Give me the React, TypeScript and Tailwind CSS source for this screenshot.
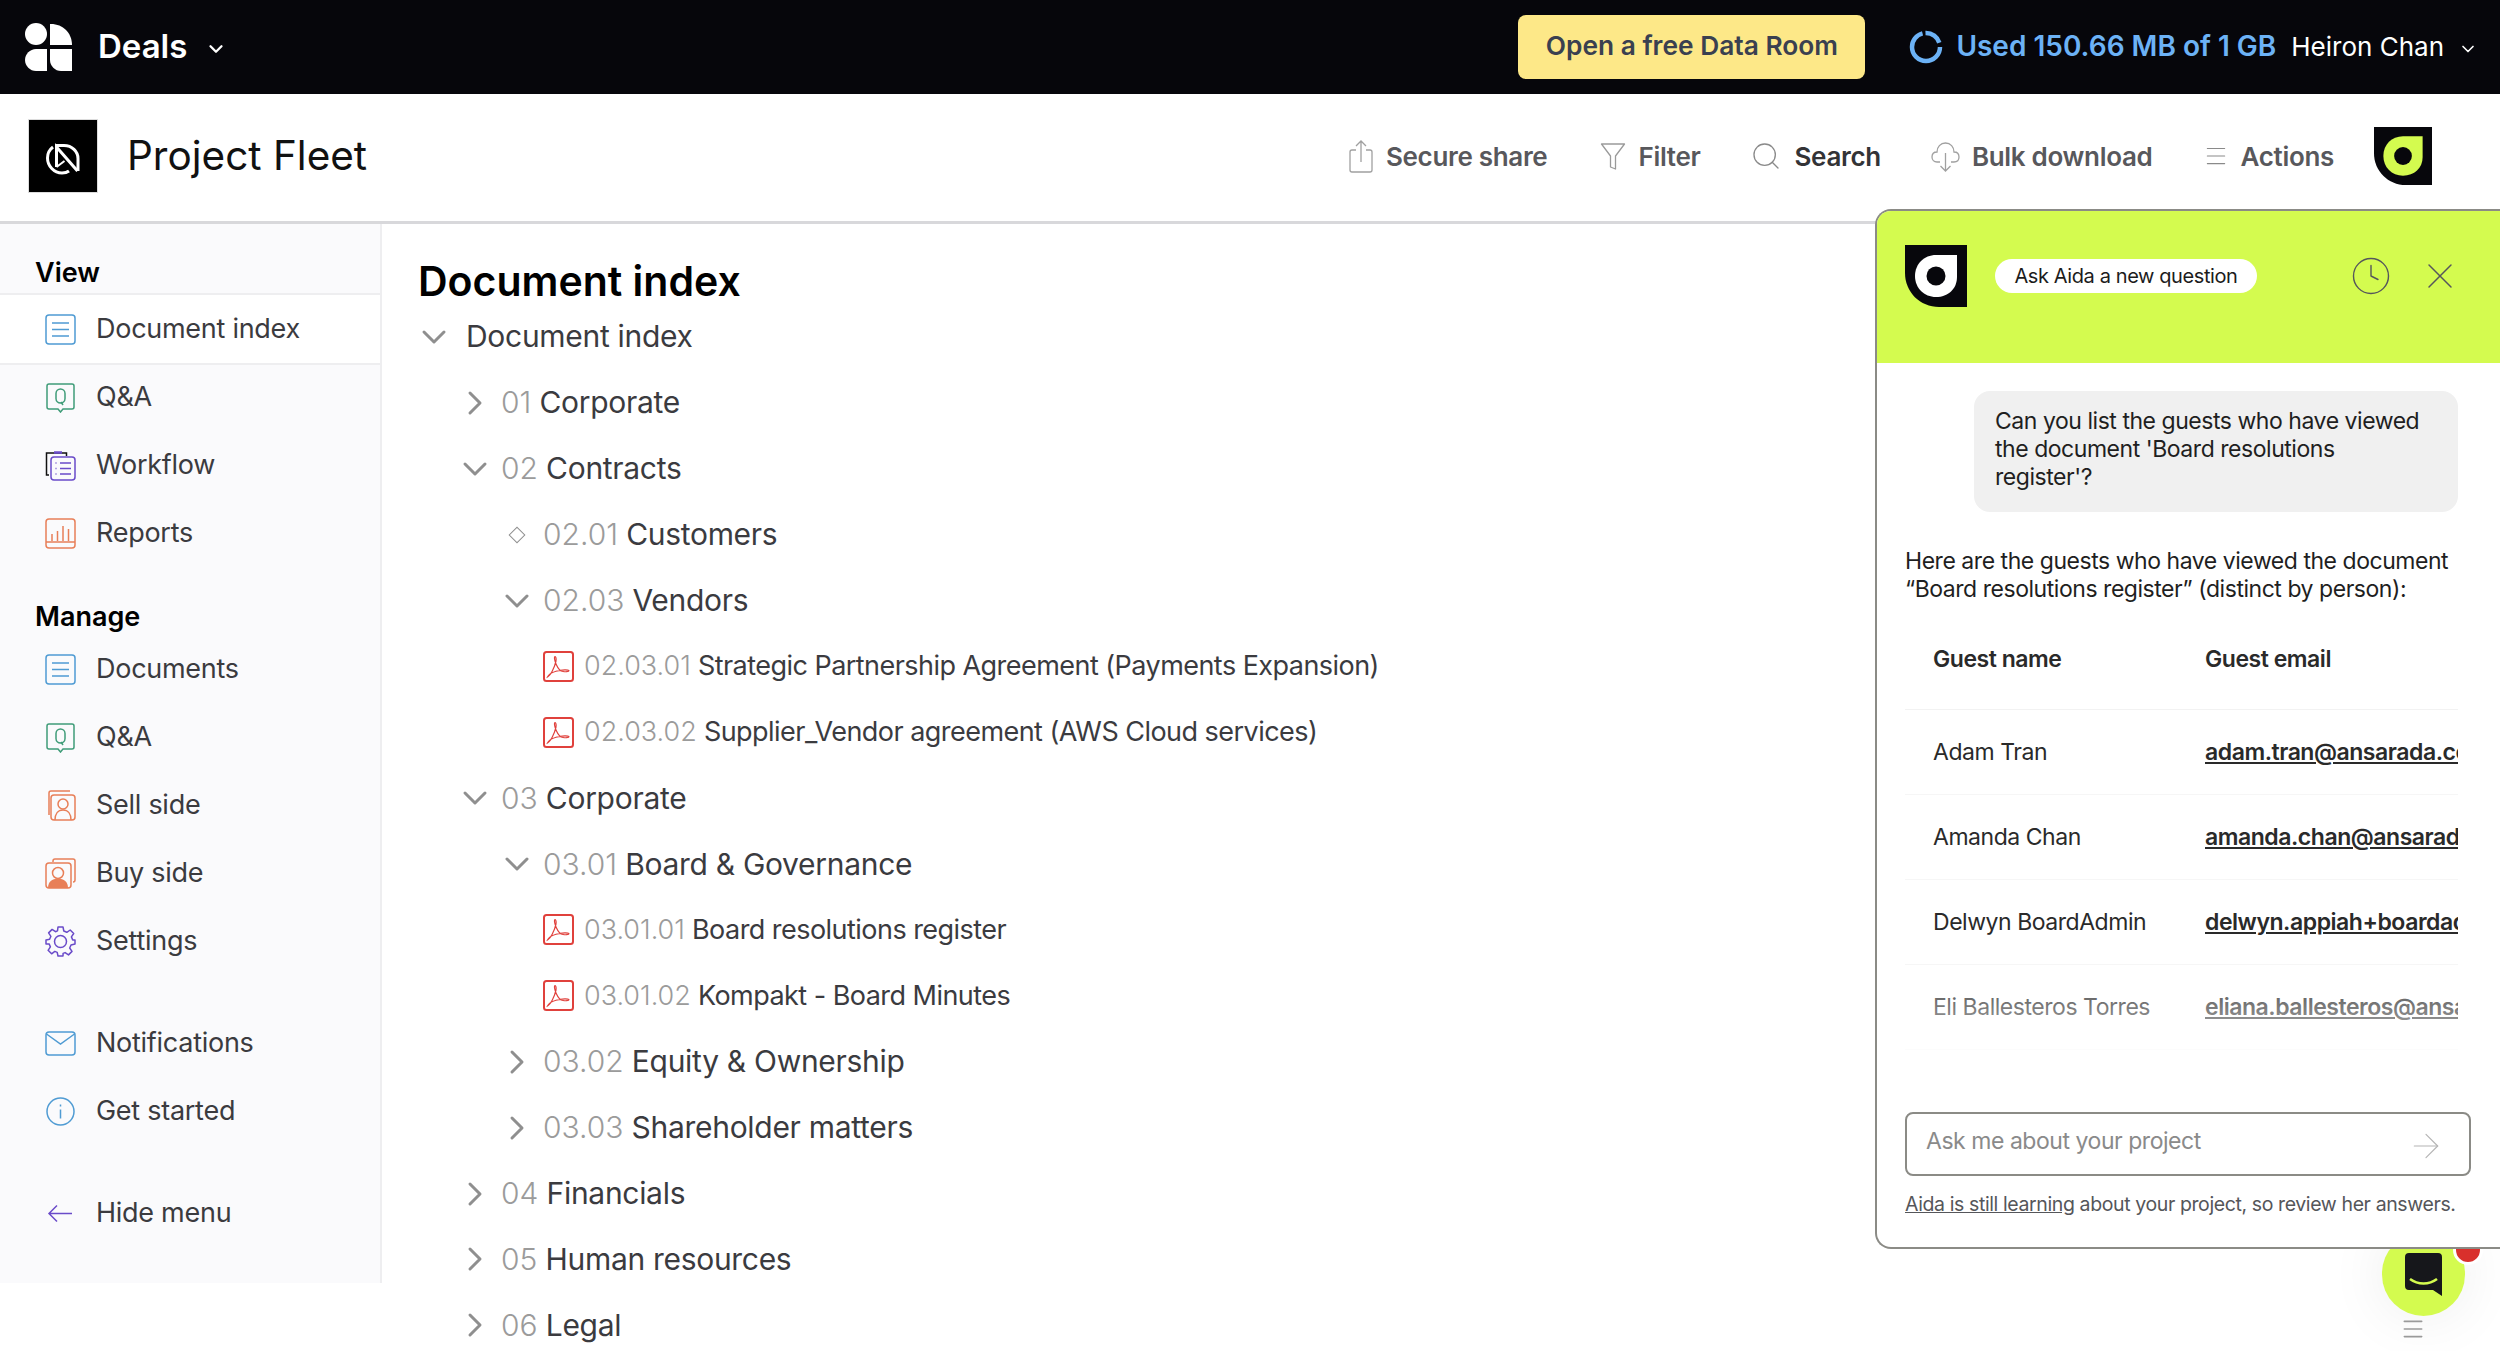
import { ArrowRight, ChevronDown, ChevronRight, Clock, Menu, Search, X } from "lucide-react";
import type { ReactNode } from "react";

const BLUE = "#4f9bd3";
const GREEN = "#3f9c78";
const PURPLE = "#6a4bc9";
const ORANGE = "#e87f58";

const Svg = ({ children, size = 31 }: { children: ReactNode; size?: number }) => (
  <svg width={size} height={size} viewBox="0 0 31 31" fill="none" strokeWidth={1.5} className="shrink-0">
    {children}
  </svg>
);

const DocIcon = () => (
  <Svg>
    <rect x="1" y="1" width="29" height="29" rx="3" stroke={BLUE} />
    <path d="M7 9h17M7 15.5h17M7 22h17" stroke={BLUE} />
  </Svg>
);

const QaIcon = () => (
  <Svg>
    <path d="M4 2h23a2 2 0 0 1 2 2v21a2 2 0 0 1-2 2h-9l-2.5 3-2.5-3H4a2 2 0 0 1-2-2V4a2 2 0 0 1 2-2z" stroke={GREEN} />
    <rect x="11" y="7" width="9" height="14" rx="4.5" stroke={GREEN} />
    <path d="M16 20l2 3" stroke={GREEN} />
  </Svg>
);

const WorkflowIcon = () => (
  <Svg>
    <path d="M4 25H1.5V3h20v3" stroke="#111" />
    <path d="M9 2.5h8" stroke={PURPLE} strokeWidth={2.5} />
    <rect x="6" y="7" width="24" height="23" rx="3" stroke={PURPLE} />
    <path d="M10.5 13h1M15 13h11M10.5 18.5h1M15 18.5h11M10.5 24h1M15 24h11" stroke={PURPLE} />
  </Svg>
);

const ReportsIcon = () => (
  <Svg>
    <rect x="1" y="1" width="29" height="29" rx="3" stroke={ORANGE} />
    <path d="M1 24h29M7 23v-7M12.5 23V13M18 23V8M23.5 23V11" stroke={ORANGE} />
  </Svg>
);

const SellIcon = () => (
  <Svg>
    <path d="M4 25V3a2 2 0 0 1 2-2h19" stroke={ORANGE} />
    <rect x="6" y="5" width="24" height="25" rx="3" stroke={ORANGE} />
    <circle cx="18" cy="14" r="5" stroke={ORANGE} />
    <path d="M10 30c0-6 3-10 8-10s8 4 8 10" stroke={ORANGE} />
  </Svg>
);

const BuyIcon = () => (
  <Svg>
    <path d="M8 4V3a2 2 0 0 1 2-2h18a2 2 0 0 1 2 2v19a2 2 0 0 1-2 2" stroke={ORANGE} />
    <rect x="1" y="5" width="25" height="25" rx="3" stroke={ORANGE} />
    <circle cx="13" cy="15" r="5.5" stroke={ORANGE} />
    <path d="M3 30c0-6 4-9.500 10-9.500s10 3.500 10 9.500z" fill={ORANGE} />
  </Svg>
);

const SettingsIcon = () => (
  <Svg>
    <circle cx="15.500" cy="15.500" r="6" stroke={PURPLE} />
    <path
      d="M13 1h5l.8 4 3 1.300 3.400-2.300 3.500 3.500-2.300 3.400 1.300 3L30 14v4l-4 1-1.300 3 2.300 3.400-3.500 3.500-3.400-2.300-2 .8L18 30h-5l-.8-3.600-2.400-1-3.200 2.400-3.500-3.500 2.300-3.400-1.300-3L1 18v-4l3.600-.7 1.300-3-2.300-3.400L7.100 3.400l3.400 2.300 2-.8z"
      stroke={PURPLE}
      strokeLinejoin="round"
    />
  </Svg>
);

const MailIcon = () => (
  <Svg>
    <rect x="1" y="4" width="29" height="23" rx="3" stroke={BLUE} />
    <path d="M1.500 6l14 10 14-10" stroke={BLUE} />
  </Svg>
);

const InfoIcon = () => (
  <Svg>
    <circle cx="15.500" cy="15.500" r="13.500" stroke={BLUE} />
    <path d="M15.500 13.500v9M15.500 8.500v2" stroke={BLUE} />
  </Svg>
);

const BackIcon = () => (
  <Svg>
    <path d="M27 15.500H4M12 7.500l-8 8 8 8" stroke={PURPLE} />
  </Svg>
);

const PdfIcon = () => (
  <svg width="31" height="31" viewBox="0 0 31 31" fill="none" className="shrink-0">
    <rect x="1" y="1" width="29" height="29" rx="2.500" stroke="#e0413c" strokeWidth="2" />
    <path
      d="M4.500 26c3-1.500 7-9 8.500-16 .4-2.500-.2-4.500-.9-4.500-1 0-.8 3.500.9 7.500 2 4.500 5 7.500 7 7.500 2 .3 6 .5 6-.7 0-1.300-7-1.300-13 .5-4 1.200-7.500 3.500-8.500 5.700z"
      stroke="#e0413c"
      strokeWidth="1.200"
    />
  </svg>
);

const AidaLogo = ({ size, inner, dot }: { size: number; inner: string; dot: string }) => (
  <svg width={size} height={size} viewBox="0 0 62 62" className="shrink-0">
    <path d="M0 0h62v62H34C15 62 0 47 0 28z" fill="#07070c" />
    <path d="M31 10h21v22c0 12-9 20-21 20S10 43 10 31s9-21 21-21z" fill={inner} />
    <circle cx="31" cy="31" r="9.500" fill={dot} />
  </svg>
);

const BrandMark = () => (
  <svg width="48" height="48" viewBox="0 0 48 48" className="shrink-0">
    <circle cx="11" cy="11" r="11" fill="#fff" />
    <path d="M25 1h1c12 0 21 9 21 21H25z" fill="#fff" />
    <path d="M22 26v22H11C5 48 0 43 0 37s5-11 11-11z" fill="#fff" />
    <path d="M25 26h22v22H36c-6 0-11-5-11-11z" fill="#fff" />
  </svg>
);

const ProjectMark = () => (
  <div className="flex h-[72px] w-[68px] items-center justify-center bg-black outline outline-[#dcdcdc]">
    <svg width="34" height="32" viewBox="0 0 34 32" fill="none" stroke="#fff" strokeWidth="3" className="mt-[5px]">
      <path d="M7 4C3 7 1.500 11 1.500 15c0 8 6.500 15 14.500 15 3 0 5-.5 7-2" />
      <path d="M10.500 24V4l21 24" />
      <path d="M10 2.500h8c8 0 14 6 14 13V28" />
      <path d="M10.500 24l8-6" strokeWidth="2" />
    </svg>
  </div>
);

const ShareIcon = () => (
  <svg width="25" height="33" viewBox="0 0 25 33" fill="none" stroke="#a0a0a0" strokeWidth="1.300" className="shrink-0">
    <path d="M7 10H3a2 2 0 0 0-2 2v18a2 2 0 0 0 2 2h18a2 2 0 0 0 2-2V12a2 2 0 0 0-2-2h-4" />
    <path d="M12 22V1M7 6l5-5 5 5" />
  </svg>
);

const FilterIcon = () => (
  <svg width="26" height="28" viewBox="0 0 26 28" fill="none" stroke="#9a9a9a" strokeWidth="1.300" className="shrink-0">
    <path d="M1.500 2h23L15.500 14v13l-5-2V14z" strokeLinejoin="round" />
  </svg>
);

const CloudIcon = () => (
  <svg width="29" height="31" viewBox="0 0 29 31" fill="none" stroke="#a0a0a0" strokeWidth="1.300" className="shrink-0">
    <path d="M9 21H6c-3 0-5-2-5-5s2-5 5-5c0-5 3.500-9 8.500-9s8.500 4 8.500 9c3 0 5 2 5 5s-2 5-5 5h-3" />
    <path d="M14.500 12v18M9.500 25l5 5 5-5" />
  </svg>
);

const NavItem = ({ icon, label, active }: { icon: ReactNode; label: string; active?: boolean }) => (
  <div className={`flex h-[68px] items-center gap-[20px] pl-[45px] text-[27px] tracking-[-0.01em] text-[#3b3b3f] ${active ? "bg-white" : ""}`}>
    {icon}
    <span>{label}</span>
  </div>
);

const Sidebar = () => (
  <aside className="flex h-[1059px] w-[382px] shrink-0 flex-col border-r-2 border-[#eeeef0] bg-[#fafafc]">
    <div className="flex h-[71px] items-end border-b-2 border-[#eeeef0] pl-[35px] text-[27px] font-semibold text-black">
      View
    </div>
    <NavItem active icon={<DocIcon />} label="Document index" />
    <div className="border-t-2 border-[#eeeef0]">
      <div className="-mt-[2px]">
        <NavItem icon={<QaIcon />} label="Q&A" />
      </div>
      <NavItem icon={<WorkflowIcon />} label="Workflow" />
      <NavItem icon={<ReportsIcon />} label="Reports" />
    </div>
    <div className="flex h-[68px] items-center pl-[35px] pt-[33px] text-[27px] font-semibold text-black">Manage</div>
    <NavItem icon={<DocIcon />} label="Documents" />
    <NavItem icon={<QaIcon />} label="Q&A" />
    <NavItem icon={<SellIcon />} label="Sell side" />
    <NavItem icon={<BuyIcon />} label="Buy side" />
    <NavItem icon={<SettingsIcon />} label="Settings" />
    <div className="mt-[34px]">
      <NavItem icon={<MailIcon />} label="Notifications" />
      <NavItem icon={<InfoIcon />} label="Get started" />
    </div>
    <div className="mt-[34px]">
      <NavItem icon={<BackIcon />} label="Hide menu" />
    </div>
  </aside>
);

type TreeRow = {
  level: 1 | 2 | 3;
  kind: "open" | "closed" | "leaf" | "file";
  num: string;
  label: string;
};

const treeRows: TreeRow[] = [
  { level: 1, kind: "closed", num: "01", label: "Corporate" },
  { level: 1, kind: "open", num: "02", label: "Contracts" },
  { level: 2, kind: "leaf", num: "02.01", label: "Customers" },
  { level: 2, kind: "open", num: "02.03", label: "Vendors" },
  { level: 3, kind: "file", num: "02.03.01", label: "Strategic Partnership Agreement (Payments Expansion)" },
  { level: 3, kind: "file", num: "02.03.02", label: "Supplier_Vendor agreement (AWS Cloud services)" },
  { level: 1, kind: "open", num: "03", label: "Corporate" },
  { level: 2, kind: "open", num: "03.01", label: "Board & Governance" },
  { level: 3, kind: "file", num: "03.01.01", label: "Board resolutions register" },
  { level: 3, kind: "file", num: "03.01.02", label: "Kompakt - Board Minutes" },
  { level: 2, kind: "closed", num: "03.02", label: "Equity & Ownership" },
  { level: 2, kind: "closed", num: "03.03", label: "Shareholder matters" },
  { level: 1, kind: "closed", num: "04", label: "Financials" },
  { level: 1, kind: "closed", num: "05", label: "Human resources" },
  { level: 1, kind: "closed", num: "06", label: "Legal" },
];

const levelPad = { 1: "pl-[41px]", 2: "pl-[83px]", 3: "pl-[125px]" };

const RowToggle = ({ kind }: { kind: TreeRow["kind"] }) => {
  if (kind === "file") return <PdfIcon />;
  return (
    <span className="flex w-[32px] shrink-0 items-center justify-center text-[#8f8f8f]">
      {kind === "open" && <ChevronDown size={40} strokeWidth={1.8} className="shrink-0" />}
      {kind === "closed" && <ChevronRight size={40} strokeWidth={1.8} className="shrink-0" />}
      {kind === "leaf" && <span className="h-[12px] w-[12px] rotate-45 border border-[#8f8f8f]" />}
    </span>
  );
};

const DocumentTree = () => (
  <main className="flex-1 pl-[36px]">
    <h1 className="flex h-[80px] items-end text-[41px] leading-[46px] font-semibold text-black">Document index</h1>
    <div className="flex h-[65.900px] items-center text-[#3b3b3f]">
      <span className="flex w-[32px] justify-center text-[#8f8f8f]">
        <ChevronDown size={40} strokeWidth={1.8} className="shrink-0" />
      </span>
      <span className="ml-[16px] text-[30px] tracking-[-0.01em]">Document index</span>
    </div>
    {treeRows.map((row) => (
      <div key={row.num} className={`flex h-[65.900px] items-center gap-[10px] ${levelPad[row.level]}`}>
        <RowToggle kind={row.kind} />
        <span className={`whitespace-nowrap ${row.level === 3 ? "text-[27px] tracking-[-0.02em]" : "text-[30px] tracking-[-0.01em]"} text-[#3b3b3f]`}>
          <span className="font-light tracking-normal text-[#9b9b9b]">{row.num}</span> {row.label}
        </span>
      </div>
    ))}
  </main>
);

const guests = [
  { name: "Adam Tran", email: "adam.tran@ansarada.com" },
  { name: "Amanda Chan", email: "amanda.chan@ansarada.com" },
  { name: "Delwyn BoardAdmin", email: "delwyn.appiah+boardadmin@ansarada.com" },
  { name: "Eli Ballesteros Torres", email: "eliana.ballesteros@ansarada.com" },
];

const AidaPanel = () => (
  <section className="absolute top-[209px] left-[1875px] z-20 flex h-[1040px] w-[625px] flex-col overflow-hidden rounded-l-[16px] border-2 border-r-0 border-[#8b8b86] bg-white">
    <header className="flex h-[152px] shrink-0 items-start bg-[#d4fb4f] pt-[34px] pl-[28px]">
      <AidaLogo size={62} inner="#fff" dot="#07070c" />
      <div className="mt-[14px] ml-[28px] flex h-[34px] w-[262px] items-center justify-center rounded-full bg-white text-[20px] tracking-[-0.02em] text-[#1c1c1c]">
        Ask Aida a new question
      </div>
      <Clock size={42} strokeWidth={0.8} className="mt-[10px] ml-[93px] text-[#55565c]" />
      <X size={44} strokeWidth={0.8} className="mt-[9px] ml-[26px] text-[#55565c]" />
    </header>
    <div className="mt-[28px] ml-[97px] w-[484px] rounded-[16px] bg-[#f0f0f0] pt-[16px] pr-[21px] pb-[21px] pl-[21px] text-[23px] leading-[28px] tracking-[-0.02em] text-[#1f1f1f]">
      Can you list the guests who have viewed the document 'Board resolutions register'?
    </div>
    <p className="mt-[36px] ml-[28px] w-[553px] text-[23px] leading-[27.500px] tracking-[-0.02em] text-[#1f1f1f]">
      Here are the guests who have viewed the document “Board resolutions register” (distinct by person):
    </p>
    <div className="relative mt-[7px] ml-[28px] h-[478px] w-[553px] shrink-0 overflow-hidden text-[23px] tracking-[-0.02em] text-[#2a2a2a]">
      <div className="flex h-[100px] items-center border-b border-[#f2f2f2] font-semibold">
        <span className="w-[300px] shrink-0 pl-[28px]">Guest name</span>
        <span>Guest email</span>
      </div>
      {guests.map((guest) => (
        <div key={guest.email} className="flex h-[85px] items-center border-b border-[#f6f6f6]">
          <span className="w-[300px] shrink-0 pl-[28px] whitespace-nowrap">{guest.name}</span>
          <span className="font-semibold whitespace-nowrap underline">{guest.email}</span>
        </div>
      ))}
      <div className="absolute inset-x-0 bottom-0 h-[130px] bg-linear-to-b from-transparent to-white" />
    </div>
    <div className="mt-[24px] ml-[28px] flex h-[64px] w-[566px] shrink-0 items-center justify-between rounded-[8px] border-2 border-[#8b8b86] pr-[23px] pl-[19px] text-[23px] tracking-[-0.02em] text-[#8a8a8a]">
      <span className="-mt-[5px]">Ask me about your project</span>
      <ArrowRight size={40} strokeWidth={0.7} className="mt-[3px] text-[#b4b4b4]" />
    </div>
    <p className="mt-[14px] ml-[28px] whitespace-nowrap text-[19.500px] leading-[28px] tracking-[-0.02em] text-[#55565a]">
      <span className="underline">Aida is still learning</span> about your project, so review her answers.
    </p>
  </section>
);

const ChatButton = () => (
  <>
    <div className="absolute top-[1232px] left-[2382px] z-10 flex h-[84px] w-[83px] items-center justify-center rounded-full bg-[#d4fb4f] shadow-[0_0_60px_rgba(0,0,0,0.08)]">
      <svg width="37" height="43" viewBox="0 0 37 43">
        <path d="M4 0h29a4 4 0 0 1 4 4v39l-9-6H4a4 4 0 0 1-4-4V4a4 4 0 0 1 4-4z" fill="#16171b" />
        <path d="M5 26c8 6 19 6 27 0" fill="none" stroke="#d4fb4f" strokeWidth="2.500" />
      </svg>
      <span className="absolute top-[3px] left-[71px] h-[30px] w-[30px] rounded-full border-[3px] border-white bg-[#d9302c]" />
    </div>
    <Menu size={26} strokeWidth={1.500} className="absolute top-[1316px] left-[2400px] z-10 text-[#9a9a9a]" />
  </>
);

const ToolItem = ({ icon, label, strong }: { icon: ReactNode; label: string; strong?: boolean }) => (
  <div className={`flex items-center gap-[12px] text-[26px] font-semibold tracking-[-0.012em] ${strong ? "text-[#333336]" : "text-[#58585c]"}`}>
    {icon}
    <span>{label}</span>
  </div>
);

const App = () => (
  <div
    className="relative h-[1351px] w-[2500px] overflow-hidden bg-white"
    style={{ fontFamily: "Inter, 'Liberation Sans', sans-serif" }}
  >
    <div className="flex h-[94px] items-center bg-[#06060b] pr-[22px] pl-[25px] text-white">
      <BrandMark />
      <span className="ml-[25px] text-[33px] font-semibold">Deals</span>
      <ChevronDown size={22} strokeWidth={2.500} className="mt-[4px] ml-[18px]" />
      <div className="ml-auto flex h-[64px] w-[347px] items-center justify-center rounded-[8px] bg-[#fde888] pb-[2px] text-[26.300px] font-semibold text-[#3a4050]">
        Open a free Data Room
      </div>
      <svg width="34" height="34" viewBox="0 0 34 34" fill="none" stroke="#6cb2f6" strokeWidth="4.500" className="ml-[44px]">
        <circle cx="17" cy="17" r="14" strokeDasharray="62 3 18 5" />
      </svg>
      <span className="ml-[13px] pb-[2px] text-[28px] font-semibold text-[#6cb2f6]">Used 150.66 MB of 1 GB</span>
      <span className="ml-[15px] pb-[2px] text-[26px]">Heiron Chan</span>
      <ChevronDown size={20} strokeWidth={2} className="mt-[3px] ml-[14px]" />
    </div>
    <div className="flex h-[130px] items-center border-b-[3px] border-[#d8d8db] pr-[68px] pb-[3px] pl-[29px]">
      <ProjectMark />
      <span className="ml-[30px] text-[40.500px] text-[#111]">Project Fleet</span>
      <div className="ml-auto flex items-center gap-[50px]">
        <div className="mr-[3px]">
          <ToolItem icon={<ShareIcon />} label="Secure share" />
        </div>
        <ToolItem icon={<FilterIcon />} label="Filter" />
        <ToolItem icon={<Search size={32} strokeWidth={1} className="text-[#8a8a8a]" />} label="Search" strong />
        <ToolItem icon={<CloudIcon />} label="Bulk download" />
        <ToolItem icon={<Menu size={26} strokeWidth={1} className="text-[#8a8a8a]" />} label="Actions" />
        <div className="-ml-[10px]">
          <AidaLogo size={58} inner="#d4fb4f" dot="#07070c" />
        </div>
      </div>
    </div>
    <div className="flex">
      <Sidebar />
      <DocumentTree />
    </div>
    <ChatButton />
    <AidaPanel />
  </div>
);

export default App;
